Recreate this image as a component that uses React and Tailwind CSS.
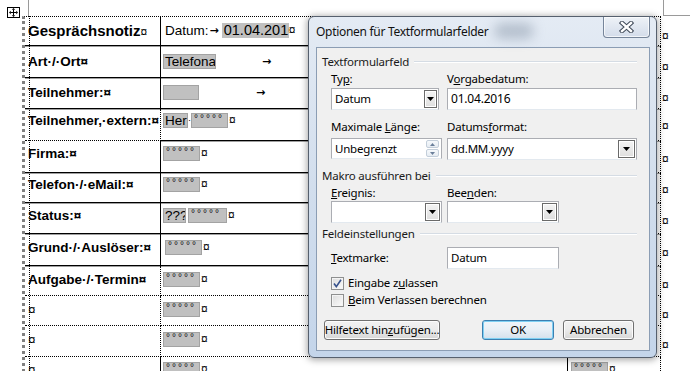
import React from 'react';

function Mark({ className = '' }) {
  return <span className={"text-[12px] leading-[15px] font-normal " + className}>¤</span>;
}

function Dots() {
  return <span className="block pl-[2px] text-[10px] leading-[9px] tracking-[2px] text-[#111]">°°°°°</span>;
}

function Box({ className = '', children }) {
  return (
    <span className={"inline-block shrink-0 h-[15px] overflow-hidden whitespace-nowrap bg-[#c0c0c0] border border-[#a3a3a3] align-top " + className}>
      {children}
    </span>
  );
}

function Tab({ className = '' }) {
  return <span className={"font-['DejaVu_Sans',sans-serif] text-[11px] leading-[15px] font-bold " + className}>→</span>;
}

const SOLID = "border-b border-black shadow-[0_1px_0_#a0a0a0]";
const DOT = "border-b border-dotted border-black";

function Row({ h, pt, b1, b2, label, c2, c3, bold = true }) {
  return (
    <div className={"flex shrink-0 " + h}>
      <div className={"w-[136px] shrink-0 border-r border-r-black pl-[3px] " + pt + " " + b1}>
        <div className={"text-[13.5px] leading-[15px] whitespace-nowrap " + (bold ? "font-bold" : "")}>{label}</div>
      </div>
      <div className={"w-[407px] shrink-0 border-r border-r-black pl-[2px] flex items-start " + pt + " " + b2}>
        {c2}
      </div>
      <div className={"w-[93px] shrink-0 border-r border-dotted border-r-black pl-[3px] flex items-start " + pt + " " + b2}>
        {c3}
      </div>
      <div className={"shrink-0 pl-[1px] " + pt}>
        <Mark />
      </div>
    </div>
  );
}

function DotField({ className = '' }) {
  return (
    <span className="flex items-start">
      <Box className={"w-[37px] " + className}><Dots /></Box>
      <Mark className="ml-[1px]" />
    </span>
  );
}

function Combo({ w, children, btn = 'w-[13px]' }) {
  return (
    <div className={"flex h-[22px] items-center border border-[#abadb3] border-b-[#e3e9ef] bg-white " + w}>
      <span className="flex-1 pl-[3px] leading-[14px] whitespace-nowrap">{children}</span>
      <div className={"mr-[1px] flex h-[18px] items-center justify-center border border-[#6a6a6a] bg-linear-to-b from-[#f4f4f4] to-[#dedede] shadow-[inset_0_0_0_1px_#ffffff] " + btn}>
        <svg width="7" height="4" viewBox="0 0 7 4"><path d="M0 0H7L3.5 4Z" fill="#000" /></svg>
      </div>
    </div>
  );
}

function Header({ children, line = 'ml-[5px]' }) {
  return (
    <div className="flex h-[14px] items-center pl-[5px] pr-[12px]">
      <span className="leading-[14px] whitespace-nowrap text-[#1a1a1a]">{children}</span>
      <div className={"h-[2px] flex-1 border-t border-[#d5dce4] border-b border-b-white " + line}></div>
    </div>
  );
}

function Check({ checked, children }) {
  return (
    <div className="flex h-[14px] items-center pl-[14px]">
      <div className="flex h-[13px] w-[13px] items-center justify-center border border-[#8e8f8f] bg-linear-to-br from-[#dcdcdc] to-[#fbfbfb] shadow-[inset_0_0_0_1px_#f4f4f4]">
        {checked && (
          <svg width="9" height="9" viewBox="0 0 9 9">
            <path d="M1 4.6 L3.3 7.6 L8 0.8" fill="none" stroke="#37528c" strokeWidth="1.6" />
          </svg>
        )}
      </div>
      <span className="ml-[4px] leading-[14px] whitespace-nowrap">{children}</span>
    </div>
  );
}

export default function App() {
  const rows = [
    {
      h: 'h-[29px]', pt: 'pt-[6px]', b1: SOLID, b2: SOLID,
      label: <span className="text-[15px]">Gesprächsnotiz<Mark /></span>,
      c2: (
        <span className="flex items-start">
          <span className="ml-[2px] text-[13.5px] leading-[15px]">Datum:</span>
          <Tab className="ml-[1px]" />
          <span className="ml-[3px] inline-block h-[15px] w-[67px] overflow-hidden bg-[#c0c0c0] text-[14.5px] leading-[15px] whitespace-nowrap pl-[2px]">01.04.2016</span>
          <Mark />
        </span>
      ),
    },
    {
      h: 'h-[32px]', pt: 'pt-[8px]', b1: SOLID, b2: SOLID, label: 'Art·/·Ort¤',
      c2: (
        <span className="flex items-start">
          <Box className="w-[53px] text-[13.5px] leading-[13px] pl-[1px]">Telefonat</Box>
          <Tab className="ml-[46px]" />
        </span>
      ),
    },
    {
      h: 'h-[31px]', pt: 'pt-[7px]', b1: SOLID, b2: SOLID, label: 'Teilnehmer:¤',
      c2: (
        <span className="flex items-start">
          <Box className="w-[36px]" />
          <Tab className="ml-[57px]" />
        </span>
      ),
    },
    {
      h: 'h-[32px]', pt: 'pt-[4px]', b1: DOT, b2: SOLID, label: 'Teilnehmer,·extern:¤',
      c2: (
        <span className="flex items-start">
          <Box className="w-[25px] text-[13.5px] leading-[13px] pl-[1px]">Herr</Box>
          <span className="w-[3px] text-[9px] leading-[15px]">·</span>
          <DotField />
        </span>
      ),
    },
    { h: 'h-[32px]', pt: 'pt-[5px]', b1: SOLID, b2: SOLID, label: 'Firma:¤', c2: <DotField /> },
    { h: 'h-[30px]', pt: 'pt-[4px]', b1: SOLID, b2: SOLID, label: 'Telefon·/·eMail:¤', c2: <DotField /> },
    {
      h: 'h-[31px]', pt: 'pt-[5px]', b1: SOLID, b2: SOLID, label: 'Status:¤',
      c2: (
        <span className="flex items-start">
          <Box className="w-[23px] text-[13.5px] leading-[13px] pl-[1px]">???</Box>
          <span className="w-[2px]"></span>
          <DotField className="w-[39px]" />
        </span>
      ),
    },
    { h: 'h-[32px]', pt: 'pt-[6px]', b1: SOLID, b2: SOLID, label: 'Grund·/·Auslöser:¤', c2: <span className="ml-[2px]"><DotField /></span> },
    { h: 'h-[30px]', pt: 'pt-[6px]', b1: DOT, b2: DOT, label: 'Aufgabe·/·Termin¤', c2: <DotField /> },
    { h: 'h-[30px]', pt: 'pt-[6px]', b1: DOT, b2: DOT, label: '¤', bold: false, c2: <DotField /> },
    { h: 'h-[31px]', pt: 'pt-[6px]', b1: DOT, b2: DOT, label: '¤', bold: false, c2: <DotField /> },
    { h: 'h-[20px]', pt: 'pt-[5px]', b1: '', b2: '', label: '¤', bold: false, c2: <DotField />, c3: <DotField /> },
  ];

  return (
    <div className="relative h-[371px] w-[690px] overflow-hidden bg-white font-['Liberation_Sans',Arial,sans-serif] text-black">
      {/* editing marks */}
      <div className="absolute left-[7px] top-[7px] flex h-[11px] w-[13px] items-center justify-center border border-black bg-white">
        <svg width="9" height="9" viewBox="0 0 9 9" fill="#000">
          <path d="M4 1.5h1v6H4z M1.5 4h6v1h-6z" />
          <path d="M4.5 0L6.2 1.8H2.8Z M4.5 9L2.8 7.2H6.2Z M0 4.5L1.8 2.8V6.2Z M9 4.5L7.2 6.2V2.8Z" />
        </svg>
      </div>
      <div className="absolute left-[28px] top-0 h-[16px] w-px bg-[#9a9a9a]"></div>
      <div className="absolute left-[663px] top-0 h-[16px] w-px bg-[#9a9a9a]"></div>
      <div className="absolute left-[663px] top-[15px] h-px w-[27px] bg-[#9a9a9a]"></div>

      {/* table */}
      <div className="pt-[16px]">
        <div className="ml-[22px] w-[639px] border-t border-dotted border-t-black border-l-[3px] border-l-[#808080] flex flex-col">
          {rows.map((r, i) => (
            <Row key={i} {...r} />
          ))}
        </div>
      </div>
      <div className="absolute left-[29px] top-[16px] bottom-0 border-l border-dotted border-black"></div>

      {/* dialog */}
      <div className="absolute left-[308px] top-[16px] flex h-[342px] w-[349px] flex-col rounded-[6px] border border-[#56606e] bg-linear-to-b from-[#e4ebf4] via-[#d2deed] to-[#c4d5ea] shadow-[0_1px_7px_1px_rgba(0,0,0,0.35)] font-['Noto_Sans',sans-serif] text-[11.5px] tracking-[-0.2px] text-black">
        <div className="relative flex h-[30px] shrink-0 items-center pl-[7px]">
          <div className="absolute left-[185px] top-[6px] h-[16px] w-[40px] rounded-full bg-[#8896a8] opacity-50 blur-[6px]"></div>
          <span className="relative leading-[14px] text-[12px] tracking-[-0.3px] text-[#111]">Optionen für Textformularfelder</span>
          <div className="absolute left-[294px] top-0 flex h-[21px] w-[47px] items-center justify-center rounded-b-[4px] border border-t-0 border-[#76859a] bg-linear-to-b from-[#eef2f7] to-[#d3dcea] shadow-[inset_0_0_0_1px_rgba(255,255,255,0.7)]">
            <svg width="15" height="12" viewBox="0 0 15 12">
              <path d="M3 2 L12 10 M12 2 L3 10" stroke="#3d4756" strokeWidth="4.4" strokeLinecap="square" />
              <path d="M3 2 L12 10 M12 2 L3 10" stroke="#ffffff" strokeWidth="2.4" strokeLinecap="square" />
            </svg>
          </div>
        </div>
        <div className="mx-[6px] ml-[7px] mb-[6px] flex flex-1 flex-col border border-[#8b9db4] bg-[#f0f0f0]">
          <div className="mt-[7px]"><Header>Textformularfeld</Header></div>

          <div className="mt-[3px] grid h-[14px] grid-cols-[111px_190px] gap-x-[5px] pl-[14px] leading-[14px]">
            <span>Ty<u>p</u>:</span>
            <span>V<u>o</u>rgabedatum:</span>
          </div>
          <div className="mt-[2px] grid grid-cols-[111px_190px] gap-x-[5px] pl-[14px]">
            <Combo w="w-[108px]">Datum</Combo>
            <div className="flex h-[22px] items-center border border-[#abadb3] border-b-[#e3e9ef] bg-white pl-[3px] text-[12px]">01.04.2016</div>
          </div>

          <div className="mt-[10px] grid h-[14px] grid-cols-[111px_190px] gap-x-[5px] pl-[14px] leading-[14px]">
            <span>Maximale <u>L</u>änge:</span>
            <span>Datums<u>f</u>ormat:</span>
          </div>
          <div className="mt-[4px] grid grid-cols-[111px_190px] gap-x-[5px] pl-[14px]">
            <div className="flex h-[21px] items-center border border-[#abadb3] border-b-[#e3e9ef] bg-white">
              <span className="flex-1 pl-[3px] leading-[14px]">Unbegrenzt</span>
              <div className="mr-[2px] flex flex-col gap-[1px]">
                <div className="flex h-[8px] w-[13px] items-center justify-center rounded-[2px] border border-[#c3ceda] bg-linear-to-b from-[#f6f9fc] to-[#e6ecf2]">
                  <svg width="5" height="3" viewBox="0 0 5 3"><path d="M0 3L2.5 0L5 3Z" fill="#6a7f9a" /></svg>
                </div>
                <div className="flex h-[8px] w-[13px] items-center justify-center rounded-[2px] border border-[#c3ceda] bg-linear-to-b from-[#f6f9fc] to-[#e6ecf2]">
                  <svg width="5" height="3" viewBox="0 0 5 3"><path d="M0 0L2.5 3L5 0Z" fill="#6a7f9a" /></svg>
                </div>
              </div>
            </div>
            <Combo w="w-[190px]" btn="w-[17px]">dd.MM.yyyy</Combo>
          </div>

          <div className="mt-[9px]"><Header>Makro ausführen bei</Header></div>
          <div className="mt-[3px] grid h-[14px] grid-cols-[111px_190px] gap-x-[5px] pl-[14px] leading-[14px]">
            <span><u>E</u>reignis:</span>
            <span>Bee<u>n</u>den:</span>
          </div>
          <div className="mt-[1px] grid grid-cols-[111px_190px] gap-x-[5px] pl-[14px]">
            <Combo w="w-[111px]" btn="w-[15px]"></Combo>
            <Combo w="w-[112px]" btn="w-[15px]"></Combo>
          </div>

          <div className="mt-[4px]"><Header>Feldeinstellungen</Header></div>
          <div className="mt-[6px] grid grid-cols-[111px_190px] items-center gap-x-[5px] pl-[14px]">
            <span className="leading-[14px]"><u>T</u>extmarke:</span>
            <div className="flex h-[22px] w-[112px] items-center border border-[#abadb3] border-b-[#e3e9ef] bg-white pl-[3px]">Datum</div>
          </div>

          <div className="mt-[7px]"><Check checked>Eingabe z<u>u</u>lassen</Check></div>
          <div className="mt-[3px]"><Check><u>B</u>eim Verlassen berechnen</Check></div>

          <div className="mt-[13px] flex pl-[7px]">
            <div className="flex h-[20px] w-[116px] items-center justify-center rounded-[3px] border border-[#707070] bg-linear-to-b from-[#f2f2f2] via-[#ebebeb] to-[#d6d6d6] shadow-[inset_0_0_0_1px_#fcfcfc] leading-[14px] whitespace-nowrap">
              Hilfetext hin<u>z</u>ufügen...
            </div>
            <div className="ml-[42px] flex h-[20px] w-[72px] items-center justify-center rounded-[3px] border border-[#3c7fb1] bg-linear-to-b from-[#f0f5fa] via-[#e8eff6] to-[#d4e0ec] shadow-[inset_0_0_0_1px_#7fd0f3] leading-[14px]">
              OK
            </div>
            <div className="ml-[9px] flex h-[20px] w-[71px] items-center justify-center rounded-[3px] border border-[#707070] bg-linear-to-b from-[#f2f2f2] via-[#ebebeb] to-[#d6d6d6] shadow-[inset_0_0_0_1px_#fcfcfc] leading-[14px]">
              Abbrechen
            </div>
          </div>
        </div>
      </div>
    </div>
  );
}
